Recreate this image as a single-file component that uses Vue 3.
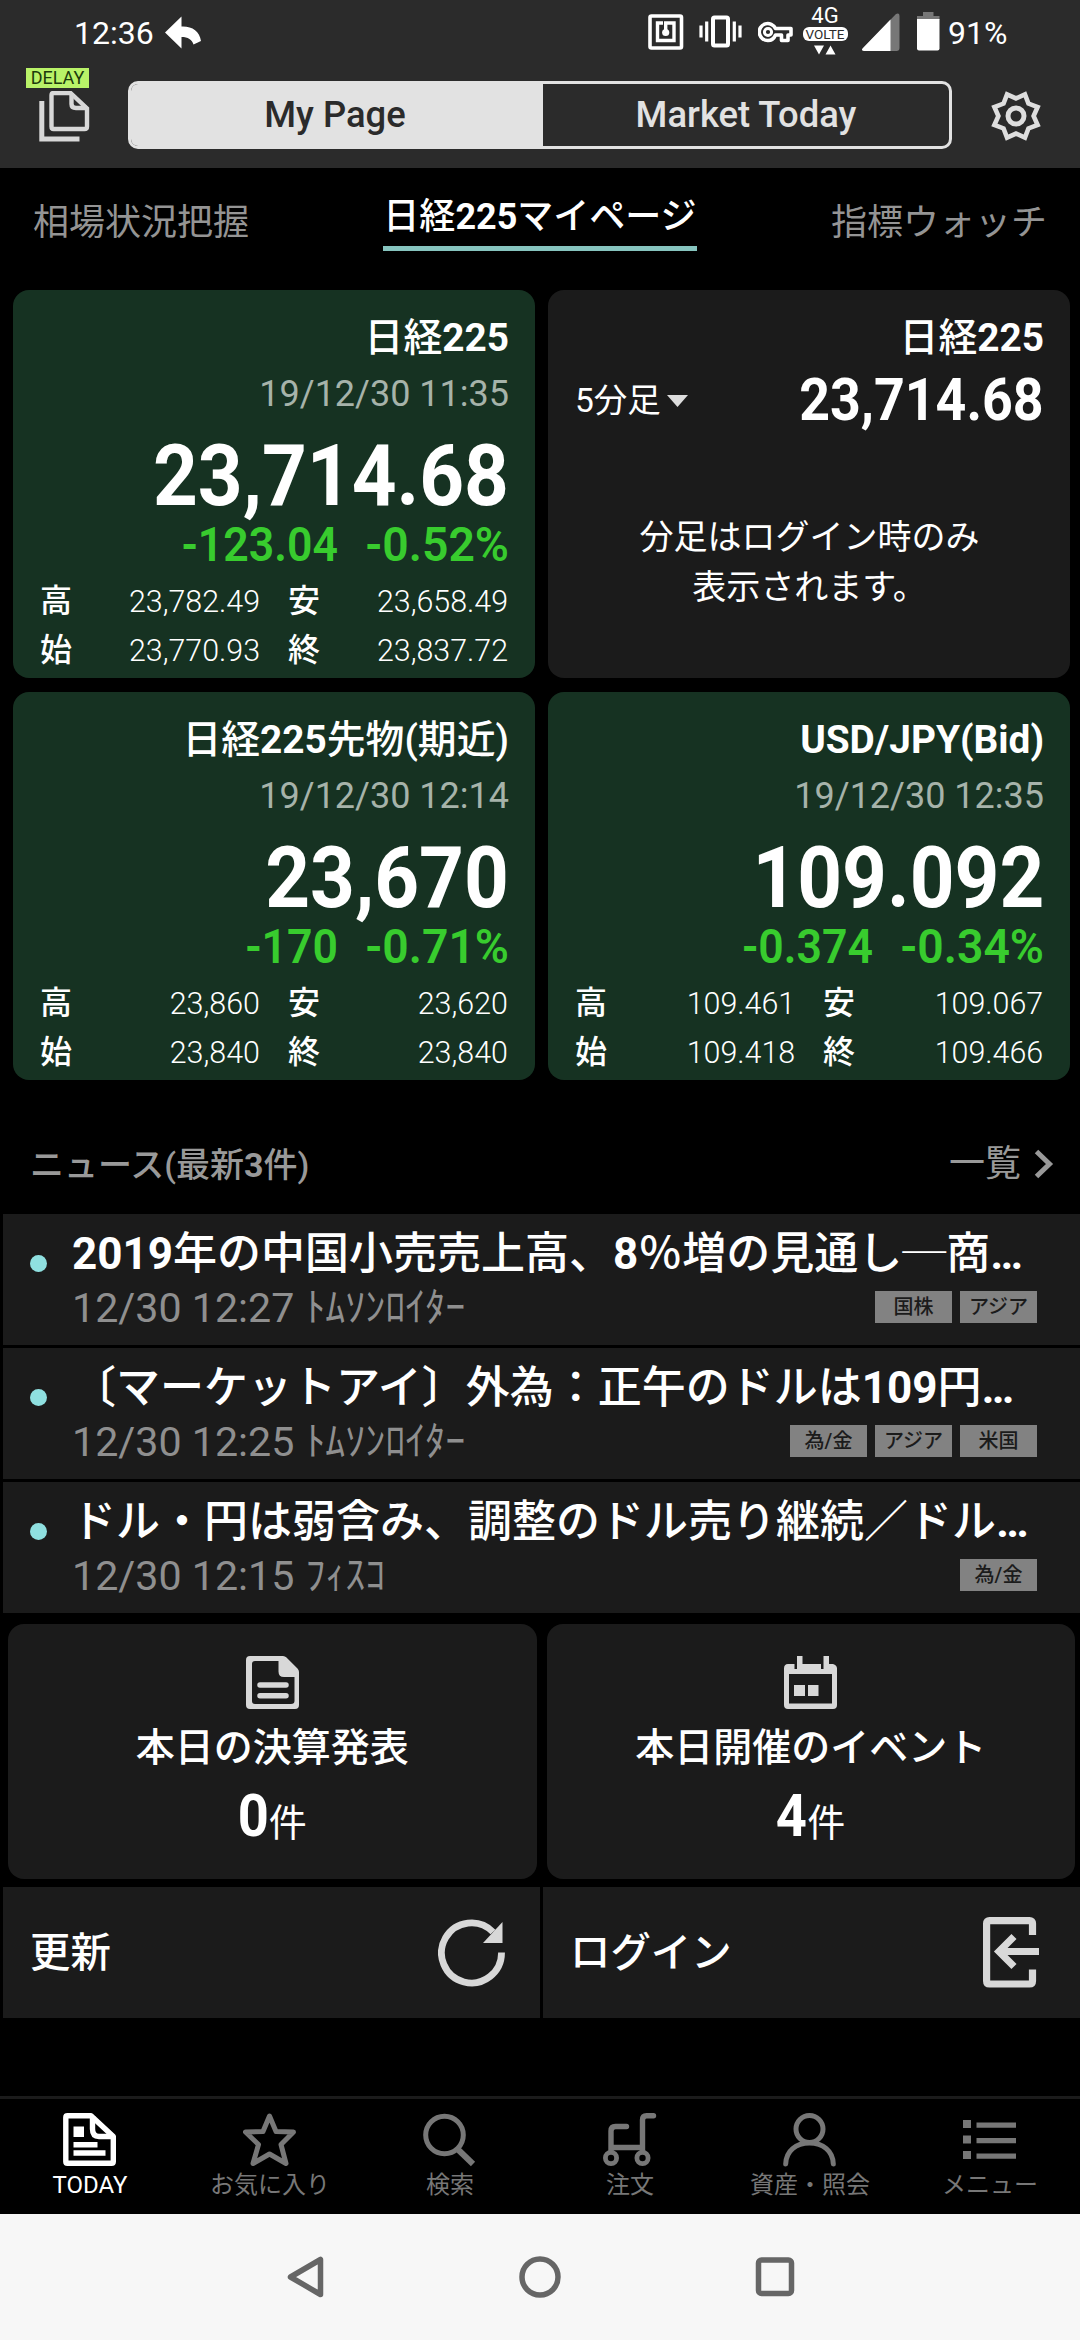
<script setup>
const quotes = [
  {
    name: '日経225', time: '19/12/30 11:35', price: '23,714.68', diff: '-123.04', rate: '-0.52%',
    rows: [['高', '23,782.49', '安', '23,658.49'], ['始', '23,770.93', '終', '23,837.72']],
  },
  { chart: true, name: '日経225', price: '23,714.68' },
  {
    name: '日経225先物(期近)', time: '19/12/30 12:14', price: '23,670', diff: '-170', rate: '-0.71%',
    rows: [['高', '23,860', '安', '23,620'], ['始', '23,840', '終', '23,840']],
  },
  {
    name: 'USD/JPY(Bid)', time: '19/12/30 12:35', price: '109.092', diff: '-0.374', rate: '-0.34%',
    rows: [['高', '109.461', '安', '109.067'], ['始', '109.418', '終', '109.466']],
  },
]

const news = [
  { title: '2019年の中国小売売上高、8％増の見通し─商…', time: '12/30 12:27', source: 'ﾄﾑｿﾝﾛｲﾀｰ', tags: ['国株', 'アジア'] },
  { title: '〔マーケットアイ〕外為：正午のドルは109円…', time: '12/30 12:25', source: 'ﾄﾑｿﾝﾛｲﾀｰ', tags: ['為/金', 'アジア', '米国'] },
  { title: 'ドル・円は弱含み、調整のドル売り継続／ドル…', time: '12/30 12:15', source: 'ﾌｨｽｺ', tags: ['為/金'] },
]

const tabs = [
  { id: 'today', label: 'TODAY' },
  { id: 'fav', label: 'お気に入り' },
  { id: 'search', label: '検索' },
  { id: 'order', label: '注文' },
  { id: 'asset', label: '資産・照会' },
  { id: 'menu', label: 'メニュー' },
]

// Latin runs are set bolder than the Japanese text around them.
const runs = (text) =>
  text.split(/([0-9A-Za-z/…]+|(?<=[A-Za-z])\(|(?<=[a-z])\))/).filter(Boolean)
    .map((t) => ({ t, latin: /^[0-9A-Za-z/…()]+$/.test(t) }))

const gearPoints = Array.from({ length: 16 }, (_, i) => {
  const r = i % 2 ? 23.4 : 17.6
  const a = (i * Math.PI) / 8
  return `${(26 + r * Math.sin(a)).toFixed(2)},${(26 - r * Math.cos(a)).toFixed(2)}`
}).join(' ')
</script>

<template>
  <div class="screen">
    <header class="top">
      <div class="status">
        <span class="clock">12:36</span>
        <svg class="reply" width="37" height="33" viewBox="0 0 37 33"><path d="M0 16.500L16.500 .5V10.500C27 10 34.500 15 36 25L28.500 28.500C27 23.500 23 21 16.500 21V32.500Z" fill="#fff" /></svg>
        <div class="indicators">
          <svg width="36" height="36" viewBox="0 0 36 36" fill="none" stroke="#fff">
            <rect x="2" y="2" width="31.500" height="32" rx="1.500" stroke-width="3.600" />
            <path d="M15 9H9.500V26.500H26V9H17.700V18" stroke-width="3.400" /><circle cx="17.700" cy="18.500" r="3.600" fill="#fff" stroke="none" />
          </svg>
          <svg width="43" height="33" viewBox="0 0 43 33" fill="none" stroke="#fff">
            <rect x="14" y="2.500" width="15" height="28" rx="1.500" stroke-width="4" />
            <path d="M2 10.500V22.500M7.700 6.500V26.500M35.300 6.500V26.500M41 10.500V22.500" stroke-width="3.200" />
          </svg>
          <svg width="35" height="22" viewBox="0 0 35 22" fill="none" stroke="#fff" stroke-width="3.600" stroke-linejoin="round">
            <path d="M17.500 7.500H33V14H30V19.500H23.500V14H17.500C16 17.500 13.500 19.500 10 19.500A8.500 8.500 0 1 1 17.500 7.500Z" /><circle cx="10" cy="11" r="3.600" stroke-width="3" />
          </svg>
          <div class="lte">
            <span class="g4">4G</span>
            <span class="volte">VOLTE</span>
            <svg width="22" height="10" viewBox="0 0 22 10"><path d="M0 .5H10L5 9.500ZM11.500 9.500H21.500L16.500 .5Z" fill="#fff" /></svg>
          </div>
          <svg width="39" height="40" viewBox="0 0 39 40"><path d="M2 36L35 2Q38.500 .5 38.500 4V36Q38.500 39 35.500 39H3Q-.5 38.500 2 36Z" fill="#777" /><path d="M2 36L29.500 7.500V39H3Q-.5 38.500 2 36Z" fill="#fff" /></svg>
          <svg width="23" height="39" viewBox="0 0 23 39"><path d="M6 0H16.500V4H22.500V8H0V4H6Z" fill="#777" /><path d="M0 7H22.500V36.500Q22.500 38.500 20.500 38.500H2Q0 38.500 0 36.500Z" fill="#fff" /></svg>
          <span class="battery">91%</span>
        </div>
      </div>
      <div class="bar">
        <div class="pages">
          <span class="delay">DELAY</span>
          <svg width="51" height="51" viewBox="0 0 51 51" fill="none" stroke="#d8d8d8">
            <path d="M2.800 10V48H40.500" stroke-width="5" />
            <path d="M14.500 2H31.500L48 17.500V35.500Q48 38 45.500 38H14.500Q12.500 38 12.500 35.500V4.500Q12.500 2 14.500 2Z" stroke-width="4.400" /><path d="M32.500 2V13Q32.500 17 37 17H48" stroke-width="4.400" />
          </svg>
        </div>
        <div class="segment"><div class="seg on">My Page</div><div class="seg">Market Today</div></div>
        <svg class="gear" width="52" height="52" viewBox="0 0 52 52" fill="none" stroke="#dedede">
          <polygon :points="gearPoints" stroke-width="4.600" /><circle cx="26" cy="26" r="8" stroke-width="5" />
        </svg>
      </div>
    </header>

    <nav class="subtabs">
      <span>相場状況把握</span>
      <span class="active">日経<b>225</b>マイページ</span>
      <span>指標ウォッチ</span>
    </nav>

    <section class="quotes">
      <article v-for="(q, i) in quotes" :key="i" class="quote" :class="{ chart: q.chart }">
        <h2><template v-for="(r, k) in runs(q.name)" :key="k"><b v-if="r.latin">{{ r.t }}</b><template v-else>{{ r.t }}</template></template></h2>
        <template v-if="q.chart">
          <div class="chart-head">
            <span class="interval">5分足<svg width="21" height="12" viewBox="0 0 21 12"><path d="M0 0H21L10.500 12Z" fill="#ddd" /></svg></span>
            <span class="num mid">{{ q.price }}</span>
          </div>
          <p class="notice">分足はログイン時のみ<br />表示されます。</p>
        </template>
        <template v-else>
          <div class="time">{{ q.time }}</div>
          <div class="price"><span class="num">{{ q.price }}</span></div>
          <div class="change"><span class="num">{{ q.diff }}</span><span class="num rate">{{ q.rate }}</span></div>
          <div class="ohlc">
            <div v-for="row in q.rows" :key="row[0]" class="ohlc-row">
              <div class="pair"><span>{{ row[0] }}</span><span class="num">{{ row[1] }}</span></div>
              <div class="pair"><span>{{ row[2] }}</span><span class="num">{{ row[3] }}</span></div>
            </div>
          </div>
        </template>
      </article>
    </section>

    <div class="news-head">
      <span class="news-title">ニュース(最新<b>3</b>件)</span>
      <span class="more">一覧<svg width="20" height="30" viewBox="0 0 20 30" fill="none" stroke="#999" stroke-width="5"><path d="M2.500 2.500L15.500 15L2.500 27.500" /></svg></span>
    </div>

    <section class="news">
      <article v-for="n in news" :key="n.time" class="item">
        <span class="dot"></span>
        <div class="body">
          <h3><template v-for="(r, k) in runs(n.title)" :key="k"><b v-if="r.latin">{{ r.t }}</b><template v-else>{{ r.t }}</template></template></h3>
          <div class="meta">
            <span class="when">{{ n.time }}</span><span class="source">{{ n.source }}</span>
            <span class="tags"><span v-for="t in n.tags" :key="t" class="tag">{{ t }}</span></span>
          </div>
        </div>
      </article>
    </section>

    <section class="events">
      <article class="event">
        <svg width="53" height="53" viewBox="0 0 53 53">
          <path fill="#d8d8d8" fill-rule="evenodd" d="M4 0H37Q39 0 40.500 1.500L51.500 12.500Q53 14 53 16V49Q53 53 49 53H4Q0 53 0 49V4Q0 0 4 0ZM6 8V45Q6 48 9 48H45Q48.500 48 48.500 45V21H38Q32.500 21 32.500 15.500V5H9Q6 5 6 8Z" />
          <path stroke="#d8d8d8" stroke-width="5.500" stroke-linecap="round" d="M14 29H40M14 39.800H40" />
        </svg>
        <h4>本日の決算発表</h4>
        <div class="count"><span class="num">0</span>件</div>
      </article>
      <article class="event">
        <svg width="53" height="53" viewBox="0 0 53 53" fill="#d8d8d8">
          <path fill-rule="evenodd" d="M4 8H10.500V13H13V0H18.500V8H37V13H39.500V0H45V8H49Q53 9 53 12.500V49Q53 53 49 53H4Q0 53 0 49V12.500Q0 8 4 8ZM5 18V47.500H48V18Z" />
          <path d="M10 29H21V40H10ZM24 29H34.500V40H24Z" />
        </svg>
        <h4>本日開催のイベント</h4>
        <div class="count"><span class="num">4</span>件</div>
      </article>
    </section>

    <section class="actions">
      <div class="action"><span>更新</span>
        <svg width="68" height="68" viewBox="0 0 68 68">
          <path d="M63.500 33.500A30 30 0 1 1 55 13" fill="none" stroke="#d8d8d8" stroke-width="6.800" /><path d="M64.500 3V24H45Z" fill="#d8d8d8" />
        </svg>
      </div>
      <div class="action"><span>ログイン</span>
        <svg width="57" height="71" viewBox="0 0 57 71" fill="none" stroke="#d8d8d8" stroke-width="7.200">
          <path d="M49.500 18V6.500Q49.500 3.600 46.500 3.600H6.500Q3.600 3.600 3.600 6.500V64Q3.600 67 6.500 67H46.500Q49.500 67 49.500 64V52.500" />
          <path d="M56 34.500H17M31 19.500L16 34.500L31 49.500" />
        </svg>
      </div>
    </section>

    <nav class="tabbar">
      <div v-for="t in tabs" :key="t.id" class="tab" :class="{ on: t.id === 'today' }">
        <svg width="54" height="54" viewBox="0 0 54 54" fill="none" stroke="currentColor" stroke-width="5" stroke-linejoin="round">
          <template v-if="t.id === 'today'">
            <path stroke-width="5.400" d="M4.500 2.800H28L50.300 23.500V48.500Q50.300 50.300 48.500 50.300H4.500Q2.800 50.300 2.800 48.500V4.500Q2.800 2.800 4.500 2.800Z" />
            <path d="M29.500 3V16Q29.500 23.500 36 23.500H50" stroke-width="5.400" />
            <path d="M10.500 13.500H21V24H10.500ZM10.500 29H34.500V34.500H10.500ZM10.500 37.300H42.500V42.700H10.500Z" fill="currentColor" stroke="none" />
          </template>
          <path v-else-if="t.id === 'fav'" d="M26.500 3L33 18.500L50.500 19L38 31.500L43 50.500L26.500 41L10 50.500L15.500 31.500L2.500 19L20 18.500Z" />
          <template v-else-if="t.id === 'search'"><circle cx="21.500" cy="22" r="18.800" /><path d="M35 36.500L50 51" stroke-width="6" /></template>
          <template v-else-if="t.id === 'order'">
            <path d="M8 38V18Q8 13.500 12.500 13.500H23.500M8 34.500H39.500M39.500 38V7Q39.500 2.700 43.500 2.700H50.500" stroke-width="5.400" stroke-linecap="round" />
            <circle cx="8" cy="45" r="5.600" stroke-width="4.800" /><circle cx="39.500" cy="45" r="5.600" stroke-width="4.800" />
          </template>
          <template v-else-if="t.id === 'asset'"><circle cx="26.500" cy="16" r="13.500" /><path d="M2.700 51C3 38 13 30 26.500 30S50 38 50.300 51" stroke-linecap="round" /></template>
          <path v-else fill="currentColor" stroke="none" d="M0 7H8V15H0ZM0 22.500H8V30.500H0ZM0 38H8V46H0ZM13.500 9.500H53V14.800H13.500ZM13.500 25H53V30.300H13.500ZM13.500 40.500H53V45.800H13.500Z" />
        </svg>
        <span>{{ t.label }}</span>
      </div>
    </nav>

    <footer class="sysnav">
      <svg width="38" height="42" viewBox="0 0 38 42"><path d="M3.500 21L33.500 3.500V38.500Z" /></svg>
      <svg width="42" height="42" viewBox="0 0 42 42"><circle cx="21" cy="21" r="18" /></svg>
      <svg width="40" height="42" viewBox="0 0 40 42"><rect x="3.500" y="4" width="33" height="33.500" rx="3" /></svg>
    </footer>
  </div>
</template>

<style>
body { background: #000; }
</style>

<style scoped>
* { box-sizing: border-box; }
.screen {
  width: 1080px; height: 2340px; overflow: hidden; background: #000; color: #fff;
  display: flex; flex-direction: column;
  font-family: Roboto, "Noto Sans CJK JP", sans-serif; font-weight: 400; white-space: nowrap;
}
h2, h3, h4, p { margin: 0; font-weight: 500; }
b { font-weight: 700; }
svg { display: block; flex: none; }
.num { display: inline-block; transform: scaleX(.92); transform-origin: right; }

.top { height: 168px; background: #2b2b2b; flex: none; }
.status { height: 66px; display: flex; align-items: center; padding-left: 74px; font-size: 32px; line-height: 66px; }
.reply { margin-left: 11px; margin-top: -2px; }
.indicators { margin-left: auto; width: 360px; height: 66px; display: flex; align-items: center; margin-right: 72px; }
.indicators > svg:nth-child(1) { margin-top: -3px; }
.indicators > svg:nth-child(2) { margin: -4px 0 0 15px; }
.indicators > svg:nth-child(3) { margin: -2px 0 0 16px; }
.lte { width: 46px; height: 48px; margin: -4px 0 0 9px; display: flex; flex-direction: column; align-items: center; flex: none; }
.g4 { font-size: 22px; line-height: 18px; height: 20px; }
.volte { width: 45px; height: 14px; border-radius: 6px; background: #fff; color: #2b2b2b; font-size: 13.500px; line-height: 15px; text-align: center; flex: none; }
.lte svg { margin-top: 4px; }
.indicators > svg:nth-child(5) { margin: -2px 0 0 13px; }
.indicators > svg:nth-child(6) { margin: -4px 0 0 17px; }
.battery { margin-left: 8px; }

.bar { display: flex; height: 102px; }
.pages { width: 128px; padding: 2px 0 0 26px; flex: none; }
.delay { display: block; width: 63px; height: 20px; background: #b9f268; color: #1c3a0c; font-size: 18px; line-height: 20px; text-align: center; }
.pages svg { margin: 3px 0 0 13px; }
.segment { width: 824px; height: 68px; margin-top: 15px; border: 3px solid #e2e2e2; border-radius: 10px; display: flex; overflow: hidden; }
.seg { flex: 1; text-align: center; font-size: 36.400px; line-height: 62px; font-weight: 500; color: #e2e2e2; }
.seg.on { background: #e2e2e2; color: #2b2b2b; flex: 0 0 412px; padding-right: 4px; }
.gear { margin: 24px 0 0 38px; }

.subtabs { height: 122px; flex: none; display: flex; justify-content: space-between; align-items: flex-start; padding: 0 33px; font-size: 36px; color: #949494; }
.subtabs span { line-height: 50px; margin-top: 30px; }
.subtabs .active { color: #fff; font-weight: 500; margin-top: 22px; height: 61px; line-height: 54px; border-bottom: 5px solid #86c4be; }

.quotes { display: grid; grid-template-columns: 522px 522px; grid-auto-rows: 388px; gap: 14px 13px; padding-left: 13px; flex: none; }
.quote { background: #163222; border-radius: 16px; padding: 26px 26px 0 27px; text-align: right; }
.quote.chart { background: #1b1b1b; }
h2 { font-size: 38.800px; line-height: 44px; }
.time { font-size: 36px; line-height: 64px; margin-top: 2px; color: #a6b3aa; }
.price { font-size: 85px; line-height: 101px; font-weight: 700; height: 100px; }
.change { font-size: 49px; line-height: 38px; height: 38px; font-weight: 600; color: #38cc2e; display: flex; justify-content: flex-end; }
.change .num { transform: scaleX(.91); }
.change .rate { transform: scaleX(.945); margin-left: 19px; }
.ohlc { margin-top: 13px; font-size: 32px; line-height: 49px; }
.ohlc-row { display: flex; gap: 28px; }
.pair { width: 220px; display: flex; justify-content: space-between; font-weight: 500; }
.pair .num { font-weight: 300; transform: scaleX(.95); }
.chart-head { display: flex; justify-content: space-between; height: 80px; line-height: 80px; }
.interval { font-size: 33.500px; display: flex; align-items: center; padding-top: 1px; }
.interval svg { margin-left: 6px; }
.num.mid { font-size: 59px; font-weight: 700; transform: scaleX(.91); }
.notice { margin-top: 72px; text-align: center; font-size: 34px; line-height: 50px; font-weight: 400; }

.news-head { height: 134px; flex: none; display: flex; justify-content: space-between; padding: 0 26px 0 30px; color: #999; }
.news-title { font-size: 34px; font-weight: 500; line-height: 171px; }
.more { display: flex; align-items: center; font-size: 36px; line-height: 50px; height: 168px; }
.more svg { margin-left: 13px; }

.news { display: flex; flex-direction: column; gap: 3px; padding-left: 3px; flex: none; }
.item { height: 131px; background: #1b1b1b; display: flex; }
.dot { width: 17px; height: 17px; border-radius: 50%; background: #8fe0e0; margin: 41px 25px 0 27px; flex: none; }
.body { flex: 1; padding: 12px 43px 0 0; min-width: 0; }
h3 { font-size: 44px; line-height: 56px; }
.meta { display: flex; align-items: center; color: #8f8f8f; height: 52px; line-height: 52px; }
.when { font-size: 41.200px; }
.source { font-size: 40px; margin-left: 11px; }
.tags { margin-left: auto; display: flex; gap: 8px; margin-top: -2px; }
.tag { width: 77px; height: 32px; background: #828282; color: #1b1b1b; font-size: 20px; font-weight: 500; line-height: 32px; text-align: center; }

.events { display: flex; gap: 10px; padding: 11px 5px 8px 8px; flex: none; }
.event { flex: 1; height: 255px; background: #1b1b1b; border-radius: 16px; display: flex; flex-direction: column; align-items: center; padding-top: 32px; }
h4 { font-size: 39px; line-height: 48px; margin-top: 15px; }
.count { font-size: 38px; line-height: 60px; margin: 14px 3px 0 0; }
.count .num { font-size: 59px; font-weight: 700; transform: scaleX(.92); }

.actions { display: flex; gap: 3px; padding-left: 3px; flex: none; }
.action { width: 537px; flex: none; height: 131px; background: #1b1b1b; display: flex; align-items: center; justify-content: space-between; padding: 0 40px 0 27px; font-size: 40.400px; font-weight: 500; }
.action span { margin-top: -7px; }
.action:first-child { padding-right: 34px; }

.tabbar { margin-top: 78px; height: 118px; border-top: 3px solid #1b1b1b; display: flex; flex: none; }
.tab { flex: 1; display: flex; flex-direction: column; align-items: center; color: #777; padding-top: 14px; font-size: 24px; line-height: 32px; }
.tab span { margin-top: 2px; }
.tab.on { color: #fff; }

.sysnav { flex: 1; background: #f7f7f7; display: flex; justify-content: center; gap: 194px; padding: 42px 0 0 1px; }
.sysnav svg { fill: none; stroke: #666; stroke-width: 5.500; stroke-linejoin: round; }
</style>
